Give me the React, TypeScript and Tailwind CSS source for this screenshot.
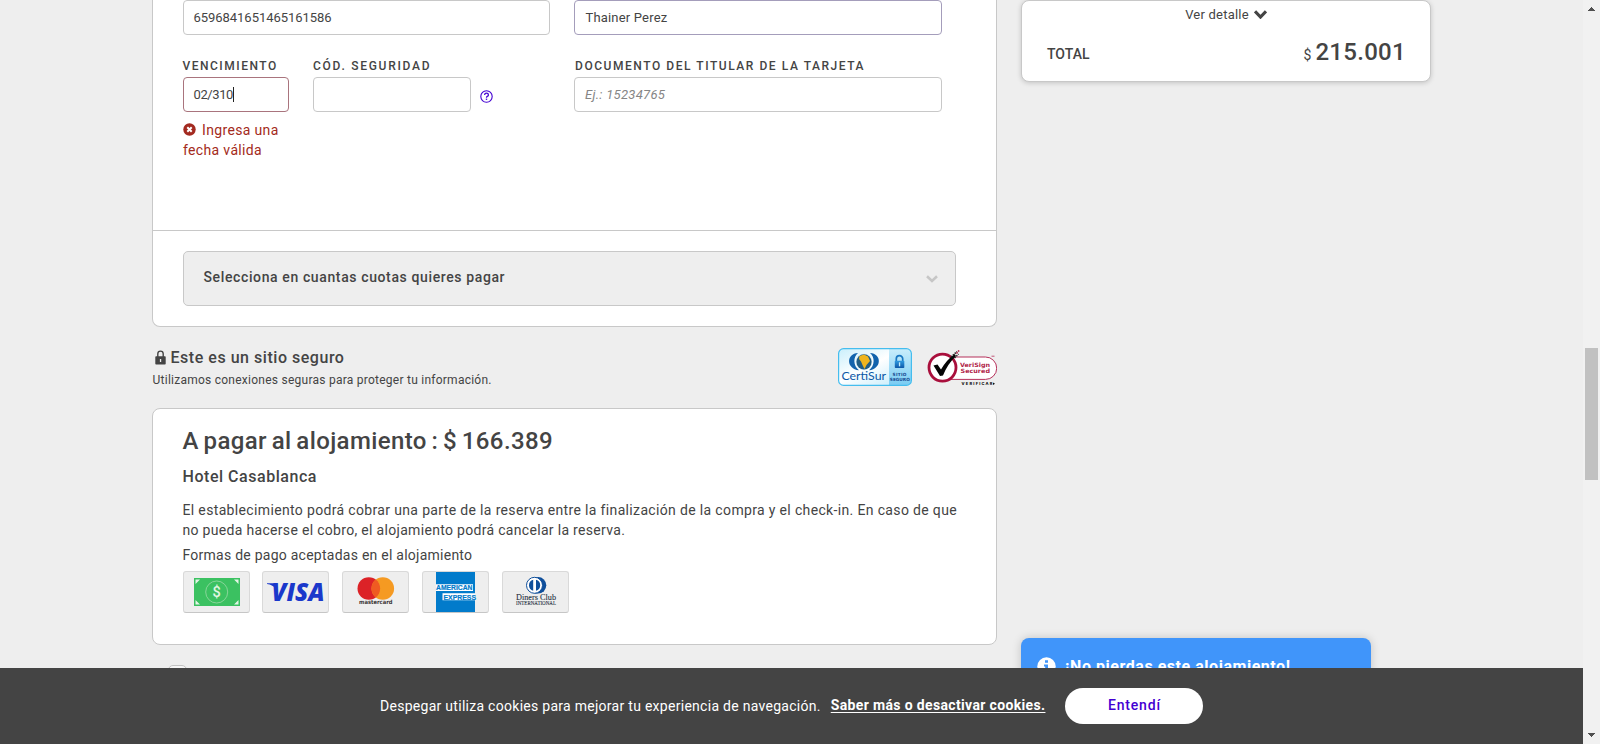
import React from "react";

function Chevron({ className, w, h, sw }: { className?: string; w: number; h: number; sw: number }) {
  return (
    <svg className={className} width={w} height={h} viewBox={`0 0 ${w} ${h}`} fill="none">
      <path d={`M1 1.3 L${w / 2} ${h - 2} L${w - 1} 1.3`} stroke="currentColor" strokeWidth={sw} />
    </svg>
  );
}

function CertiSur() {
  return (
    <svg width="74" height="38" viewBox="0 0 74 38" className="shrink-0">
      <defs>
        <linearGradient id="cs-bg" x1="0" y1="0" x2="1" y2="1">
          <stop offset="0" stopColor="#c9effc" />
          <stop offset="0.45" stopColor="#ffffff" />
          <stop offset="1" stopColor="#b9e8fa" />
        </linearGradient>
        <linearGradient id="cs-side" x1="0" y1="0" x2="0" y2="1">
          <stop offset="0" stopColor="#c8edfb" />
          <stop offset="1" stopColor="#7accf3" />
        </linearGradient>
        <linearGradient id="cs-lock" x1="0" y1="0" x2="0" y2="1">
          <stop offset="0" stopColor="#2f9be0" />
          <stop offset="1" stopColor="#0d57a8" />
        </linearGradient>
      </defs>
      <rect x="0.5" y="0.5" width="73" height="37" rx="5" fill="url(#cs-bg)" />
      <path d="M51 1 H68.5 Q73 1 73 5.500 V32.500 Q73 37 68.500 37 H51 Z" fill="url(#cs-side)" />
      <rect x="0.6" y="0.6" width="72.800" height="36.800" rx="5" fill="none" stroke="#45bdee" strokeWidth="1.200" />
      <path d="M20 5 C8 5.500 8 21 21 22.300 C15 17.500 15 9 20 5Z" fill="#1263ad" />
      <path d="M32 5 C44 5.500 44 21 31 22.300 C37 17.500 37 9 32 5Z" fill="#1263ad" />
      <circle cx="26" cy="13.800" r="8.400" fill="#d5eefa" />
      <circle cx="26" cy="13.800" r="7.600" fill="#205d84" />
      <path d="M21.500 8 L26 6.500 L30 8.500 L32 13 L28.500 17 L26.500 21 L24.500 17 L23 13.500 L21 11Z" fill="#efb51e" />
      <text x="3.500" y="31.500" fontSize="10.500" fontFamily="Lato, sans-serif" fontWeight="400" textLength="44.500" lengthAdjust="spacingAndGlyphs" fill="#0b57a6">CertiSur</text>
      <path d="M58.300 14 V10.800 A3.200 3.200 0 0 1 64.700 10.800 V14" fill="none" stroke="#1877c2" strokeWidth="1.700" />
      <rect x="56.800" y="12.800" width="9.500" height="7.200" rx="0.800" fill="url(#cs-lock)" />
      <rect x="60.900" y="14.300" width="1.300" height="4" fill="#c8edfb" />
      <text x="54.500" y="28.200" fontSize="4.300" fontFamily="DejaVu Sans, sans-serif" fontWeight="700" textLength="14" fill="#174a91">SITIO</text>
      <text x="51.800" y="33.100" fontSize="4.300" fontFamily="DejaVu Sans, sans-serif" fontWeight="700" textLength="20" lengthAdjust="spacingAndGlyphs" fill="#174a91">SEGURO</text>
    </svg>
  );
}

function VeriSign() {
  return (
    <svg width="70" height="38" viewBox="0 0 70 38" className="shrink-0">
      <path d="M22 9 H58.500 A11.200 11.200 0 0 1 58.500 31.400 H22Z" fill="#fff" stroke="#b5305a" strokeWidth="1" />
      <circle cx="15.500" cy="19.600" r="13.500" fill="#fff" stroke="#a90f3c" strokeWidth="2.800" />
      <path d="M6.500 17.500 L10.500 16.500 L14 21.500 Q19 12.500 27.500 6 L29 8 Q20.500 16 16 27.500 L13 28 Z" fill="#050505" />
      <path d="M24 9 L30 3.500 M27.500 10 L31.500 6" stroke="#222" strokeWidth="1.500" strokeDasharray="1.500 1" />
      <path d="M29.500 5.500 L32.500 2" stroke="#a90f3c" strokeWidth="1.500" strokeDasharray="1.500 1" />
      <text x="33" y="19.200" fontSize="5.800" fontFamily="DejaVu Sans, sans-serif" fontWeight="700" textLength="30" lengthAdjust="spacingAndGlyphs" fill="#b01c48">VeriSign</text>
      <text x="33.500" y="25.200" fontSize="5.800" fontFamily="DejaVu Sans, sans-serif" fontWeight="700" textLength="29.500" lengthAdjust="spacingAndGlyphs" fill="#b01c48">Secured</text>
      <path d="M64.500 8.200 h3" stroke="#b5305a" strokeWidth="0.800" />
      <text x="34.500" y="37" fontSize="4" fontFamily="Inter, sans-serif" fontWeight="800" textLength="31" fill="#111">VERIFICAR</text>
      <path d="M66 34.500 l2 1.300 l-2 1.200z" fill="#111" />
    </svg>
  );
}

function PayCard({ children }: { children: React.ReactNode }) {
  return (
    <div className="flex h-[42px] w-[67px] items-center justify-center overflow-hidden rounded-[3px] border border-b-[#c6c6c6] border-[#d9d9d9] bg-[#eee]">
      {children}
    </div>
  );
}

const svgProps = { width: 65, height: 40, viewBox: "1 1 65 40", className: "shrink-0" };

function Cash() {
  return (
    <svg {...svgProps}>
      <rect x="11" y="7" width="46" height="28" fill="#3bc161" />
      <path d="M12.500 8.500 h4.500 l-4.500 4.500z M55.500 8.500 h-4.500 l4.500 4.500z M12.500 33.500 h4.500 l-4.500 -4.500z M55.500 33.500 h-4.500 l4.500 -4.500z" fill="#e4f5e6" />
      <circle cx="33.700" cy="21" r="11" fill="none" stroke="#9bd9a6" strokeWidth="0.800" />
      <text x="33.700" y="26" textAnchor="middle" fontSize="14.500" fontFamily="Roboto, sans-serif" fontWeight="500" fill="#e2f6e4">$</text>
    </svg>
  );
}

function Visa() {
  return (
    <svg {...svgProps}>
      <path d="M5 12.300 H12.500 L15 18 Q10.500 13.600 5 12.900Z" fill="#1a38cb" />
      <text x="9.500" y="30.400" fontSize="25.500" fontFamily="Open Sans, sans-serif" fontStyle="italic" fontWeight="800" textLength="53" lengthAdjust="spacingAndGlyphs" fill="#1a38cb">VISA</text>
    </svg>
  );
}

function Mastercard() {
  return (
    <svg {...svgProps}>
      <circle cx="26.800" cy="17.500" r="11.300" fill="#dc2227" />
      <circle cx="40.800" cy="17.500" r="11.300" fill="#f59a22" />
      <path d="M33.800 8.600 A11.300 11.300 0 0 1 33.800 26.400 A11.300 11.300 0 0 1 33.800 8.600Z" fill="#ef5b22" />
      <text x="17" y="33.400" fontSize="5.700" fontFamily="DejaVu Sans, sans-serif" fontWeight="700" textLength="33.500" lengthAdjust="spacingAndGlyphs" fill="#3a3536">mastercard</text>
    </svg>
  );
}

function Amex() {
  return (
    <svg {...svgProps}>
      <rect x="14" y="1" width="39" height="40" fill="#027bcb" />
      <path d="M14 13.200 H51 V20 H14Z M20.500 22.200 H53 V29.200 H20.500Z" fill="#fff" />
      <g fontFamily="Liberation Sans, sans-serif" fontWeight="700" fontSize="7.600" fill="#027bcb" stroke="#027bcb" strokeWidth="0.200">
        <text x="14" y="19.400" textLength="36.500" lengthAdjust="spacingAndGlyphs">AMERICAN</text>
        <text x="21.500" y="28.500" textLength="32.500" lengthAdjust="spacingAndGlyphs">EXPRESS</text>
      </g>
    </svg>
  );
}

function Diners() {
  return (
    <svg {...svgProps}>
      <path d="M32.500 6 H36 A8.200 8.200 0 0 1 36 22.600 H32.500Z" fill="#0f4f9b" />
      <circle cx="32.500" cy="14.300" r="8" fill="#fff" stroke="#0f4f9b" strokeWidth="1" />
      <path d="M31.200 8.800 A5.700 5.700 0 0 0 31.200 19.800Z M34 8.800 A5.700 5.700 0 0 1 34 19.800Z" fill="#0f4f9b" />
      <text x="14" y="29.200" fontSize="8.600" fontFamily="Liberation Serif, serif" textLength="40" lengthAdjust="spacingAndGlyphs" fill="#26313f" stroke="#26313f" strokeWidth="0.100">Diners Club</text>
      <text x="14" y="34.300" fontSize="5.200" fontFamily="Liberation Serif, serif" textLength="40" lengthAdjust="spacingAndGlyphs" fill="#26313f" stroke="#26313f" strokeWidth="0.100">INTERNATIONAL</text>
    </svg>
  );
}

const label = "mb-[3px] block whitespace-nowrap text-[12px] font-medium leading-4 ";
const box = "flex h-[35px] items-center rounded-[4px] border bg-white px-[9.5px] text-[13px] leading-4 ";

export default function App() {
  return (
    <div className="relative flex h-[744px] w-[1600px] overflow-hidden bg-[#eee] font-['Roboto',sans-serif] text-[#444]">
      <div className="flex w-[1583px] pl-[152px]">
        <main className="flex w-[845px] shrink-0 flex-col">
          <section className="h-[327px] shrink-0 rounded-b-[8px] border border-t-0 border-[#c8c8c8] bg-white">
            <div className="h-[230px] pl-[30px]">
              <div className="flex gap-6">
                <div className={box + "w-[367px] border-[#c8c8c8] tracking-[-0.04px]"}>6596841651465161586</div>
                <div className={box + "w-[368px] border-[#a49dbb] pl-[10.5px] tracking-[0.18px]"}>Thainer Perez</div>
              </div>
              <div className="mt-[23px] flex gap-6">
                <div className="w-[106px]">
                  <span className={label + "-ml-[0.5px] tracking-[1.5px]"}>VENCIMIENTO</span>
                  <div className={box + "border-[#a9747d] tracking-[-0.4px]"}>
                    02/310
                    <span className="h-[15px] w-px bg-[#222]" />
                  </div>
                  <p className="mt-2 w-[100px] text-[14px] leading-5 tracking-[0.35px] text-[#a32a20]">
                    <svg className="mr-[6px] inline-block align-[-1px]" width="13" height="13" viewBox="0 0 13 13">
                      <circle cx="6.500" cy="6.500" r="6.200" fill="#a32a20" />
                      <path d="M4.300 4.300 L8.700 8.700 M8.700 4.300 L4.300 8.700" stroke="#fff" strokeWidth="2" />
                    </svg>
                    Ingresa una fecha válida
                  </p>
                </div>
                <div className="w-[237px]">
                  <span className={label + "tracking-[1.72px]"}>CÓD. SEGURIDAD</span>
                  <div className="flex items-center gap-[8.500px]">
                    <div className={box + "w-[158px] border-[#c8c8c8]"} />
                    <svg className="mt-[4px]" width="13" height="13" viewBox="0 0 13 13" fill="none">
                      <circle cx="6.500" cy="6.500" r="5.700" stroke="#4300d2" strokeWidth="1.100" />
                      <path d="M4.600 5 Q4.700 3.200 6.500 3.200 Q8.400 3.200 8.400 4.900 Q8.400 5.900 7.300 6.400 Q6.500 6.800 6.500 7.800" stroke="#4300d2" strokeWidth="1.300" />
                      <path d="M5.800 8.600 h1.400 v1.300 h-1.400z" fill="#4300d2" />
                    </svg>
                  </div>
                </div>
                <div className="w-[368px]">
                  <span className={label + "pl-px tracking-[1.55px]"}>DOCUMENTO DEL TITULAR DE LA TARJETA</span>
                  <div className={box + "border-[#c8c8c8] pl-[10px] italic tracking-[0.28px] text-[#858585]"}>Ej.: 15234765</div>
                </div>
              </div>
            </div>
            <div className="border-t border-[#c8c8c8] px-[30px] pt-5">
              <div className="flex h-[55px] w-[773px] items-center justify-between rounded-[5px] border border-[#c8c8c8] bg-[#eee] pl-[19.5px] pr-[17px]">
                <span className="pb-[3px] text-[14px] font-medium leading-5 tracking-[0.62px]">Selecciona en cuantas cuotas quieres pagar</span>
                <Chevron className="text-[#c6c6c6]" w={12} h={8} sw={2.6} />
              </div>
            </div>
          </section>

          <div className="flex h-[81px] shrink-0 justify-between pt-[21px]">
            <div>
              <div className="flex items-center">
                <svg className="-mt-px ml-[3px] mr-[4.5px]" width="11" height="15" viewBox="0 0 11 15">
                  <path d="M2.800 7 V3.800 A2.700 2.700 0 0 1 8.200 3.800 V7" fill="none" stroke="#444" strokeWidth="1.400" />
                  <rect x="0.300" y="6.300" width="10.400" height="8.200" rx="0.800" fill="#444" />
                  <rect x="4.900" y="9" width="1.300" height="3" fill="#eee" />
                </svg>
                <span className="text-[16px] font-medium leading-5 tracking-[0.53px]">Este es un sitio seguro</span>
              </div>
              <p className="ml-[0.5px] mt-1 text-[12px] leading-4 tracking-[0.25px]">Utilizamos conexiones seguras para proteger tu información.</p>
            </div>
            <div className="flex h-[38px] gap-[15px]">
              <CertiSur />
              <VeriSign />
            </div>
          </div>

          <section className="h-[237px] shrink-0 rounded-[8px] border border-[#c8c8c8] bg-white pl-[29.5px] pt-4">
            <h2 className="whitespace-nowrap text-[24px] font-medium leading-8 tracking-[0.39px] [word-spacing:-1.6px]">A pagar al alojamiento : $ 166.389</h2>
            <h3 className="mt-[10px] text-[16px] font-medium leading-5 tracking-[0.54px]">Hotel Casablanca</h3>
            <p className="mt-[13px] whitespace-nowrap text-[14px] leading-5">
              <span className="tracking-[0.347px]">El establecimiento podrá cobrar una parte de la reserva entre la finalización de la compra y el check-in. En caso de que</span>
              <br />
              <span className="tracking-[0.312px]">no pueda hacerse el cobro, el alojamiento podrá cancelar la reserva.</span>
            </p>
            <p className="mt-[5px] text-[14px] leading-5 tracking-[0.25px]">Formas de pago aceptadas en el alojamiento</p>
            <div className="ml-[0.5px] mt-[6px] flex gap-[13px]">
              <div className="-mr-px"><PayCard><Cash /></PayCard></div>
              <PayCard><Visa /></PayCard>
              <PayCard><Mastercard /></PayCard>
              <PayCard><Amex /></PayCard>
              <PayCard><Diners /></PayCard>
            </div>
          </section>
          <div className="ml-[16px] mt-5 size-[19px] shrink-0 rounded-[5px] border border-[#c2c2c2] bg-[#f6f6f6]" />
        </main>

        <aside className="ml-6 flex w-[410px] flex-col justify-between">
          <section className="h-[82px] w-[410px] rounded-[8px] border border-[#c8c8c8] bg-white px-[25px] shadow-[0_1px_5px_rgba(0,0,0,0.18)]">
            <div className="mt-[4px] flex items-center justify-center gap-[5px] text-[13px] leading-5 tracking-[0.22px]">
              Ver detalle
              <Chevron className="-mt-[2px]" w={13} h={9} sw={3.2} />
            </div>
            <div className="mt-[11px] flex items-baseline justify-between leading-8">
              <span className="relative -top-px text-[14px] font-medium tracking-[0.03px]">TOTAL</span>
              <span className="-mr-px flex items-baseline gap-1 text-[14px]">
                $<span className="text-[24px] font-medium tracking-[0.3px]">215.001</span>
              </span>
            </div>
          </section>
          <section className="h-[106px] w-[350px] rounded-t-[8px] bg-[#4095fa] px-4 pt-[15px] shadow-[0_0_10px_rgba(0,0,0,0.18)]">
            <div className="flex items-center gap-[9px] text-[16px] font-bold leading-[22px] tracking-[0.54px] text-white">
              <svg width="19" height="19" viewBox="0 0 19 19" className="mt-px">
                <circle cx="9.500" cy="9.500" r="9.200" fill="#fff" />
                <path d="M8 3.200 h3 v2.600 h-3z M7 7.600 h4 v5.400 h1.200 v2 h-5.200 v-2 h1.200 v-3.400 h-1.200z" fill="#4095fa" />
              </svg>
              <span className="mt-[3px]">¡No pierdas este alojamiento!</span>
            </div>
          </section>
        </aside>
      </div>

      <div className="flex w-[17px] flex-col items-center bg-[#f1f1f1]">
        <svg width="17" height="17" viewBox="0 0 17 17"><path d="M5 11 V10 H6 V9 H7 V8 H8 V7 H9 V8 H10 V9 H11 V10 H12 V11Z" fill="#505050" /></svg>
        <div className="mt-[331px] h-[132px] w-[13px] bg-[#c1c1c1]" />
        <svg className="mt-auto" width="17" height="17" viewBox="0 0 17 17"><path d="M5 6 V7 H6 V8 H7 V9 H8 V10 H9 V9 H10 V8 H11 V7 H12 V6Z" fill="#505050" /></svg>
      </div>

      <footer className="absolute bottom-0 left-0 flex h-[76px] w-[1583px] items-center bg-[#444] pl-[380px] text-[14px] leading-5 text-white">
        <span className="tracking-[0.28px]">Despegar utiliza cookies para mejorar tu experiencia de navegación.</span>
        <a className="-mt-[2px] ml-[10px] font-bold tracking-[0.35px] underline underline-offset-2">Saber más o desactivar cookies.</a>
        <button className="ml-[20px] h-9 w-[138px] rounded-full bg-white pb-[2px] font-medium tracking-[0.8px] text-[#4300d2]">Entendí</button>
      </footer>
    </div>
  );
}
